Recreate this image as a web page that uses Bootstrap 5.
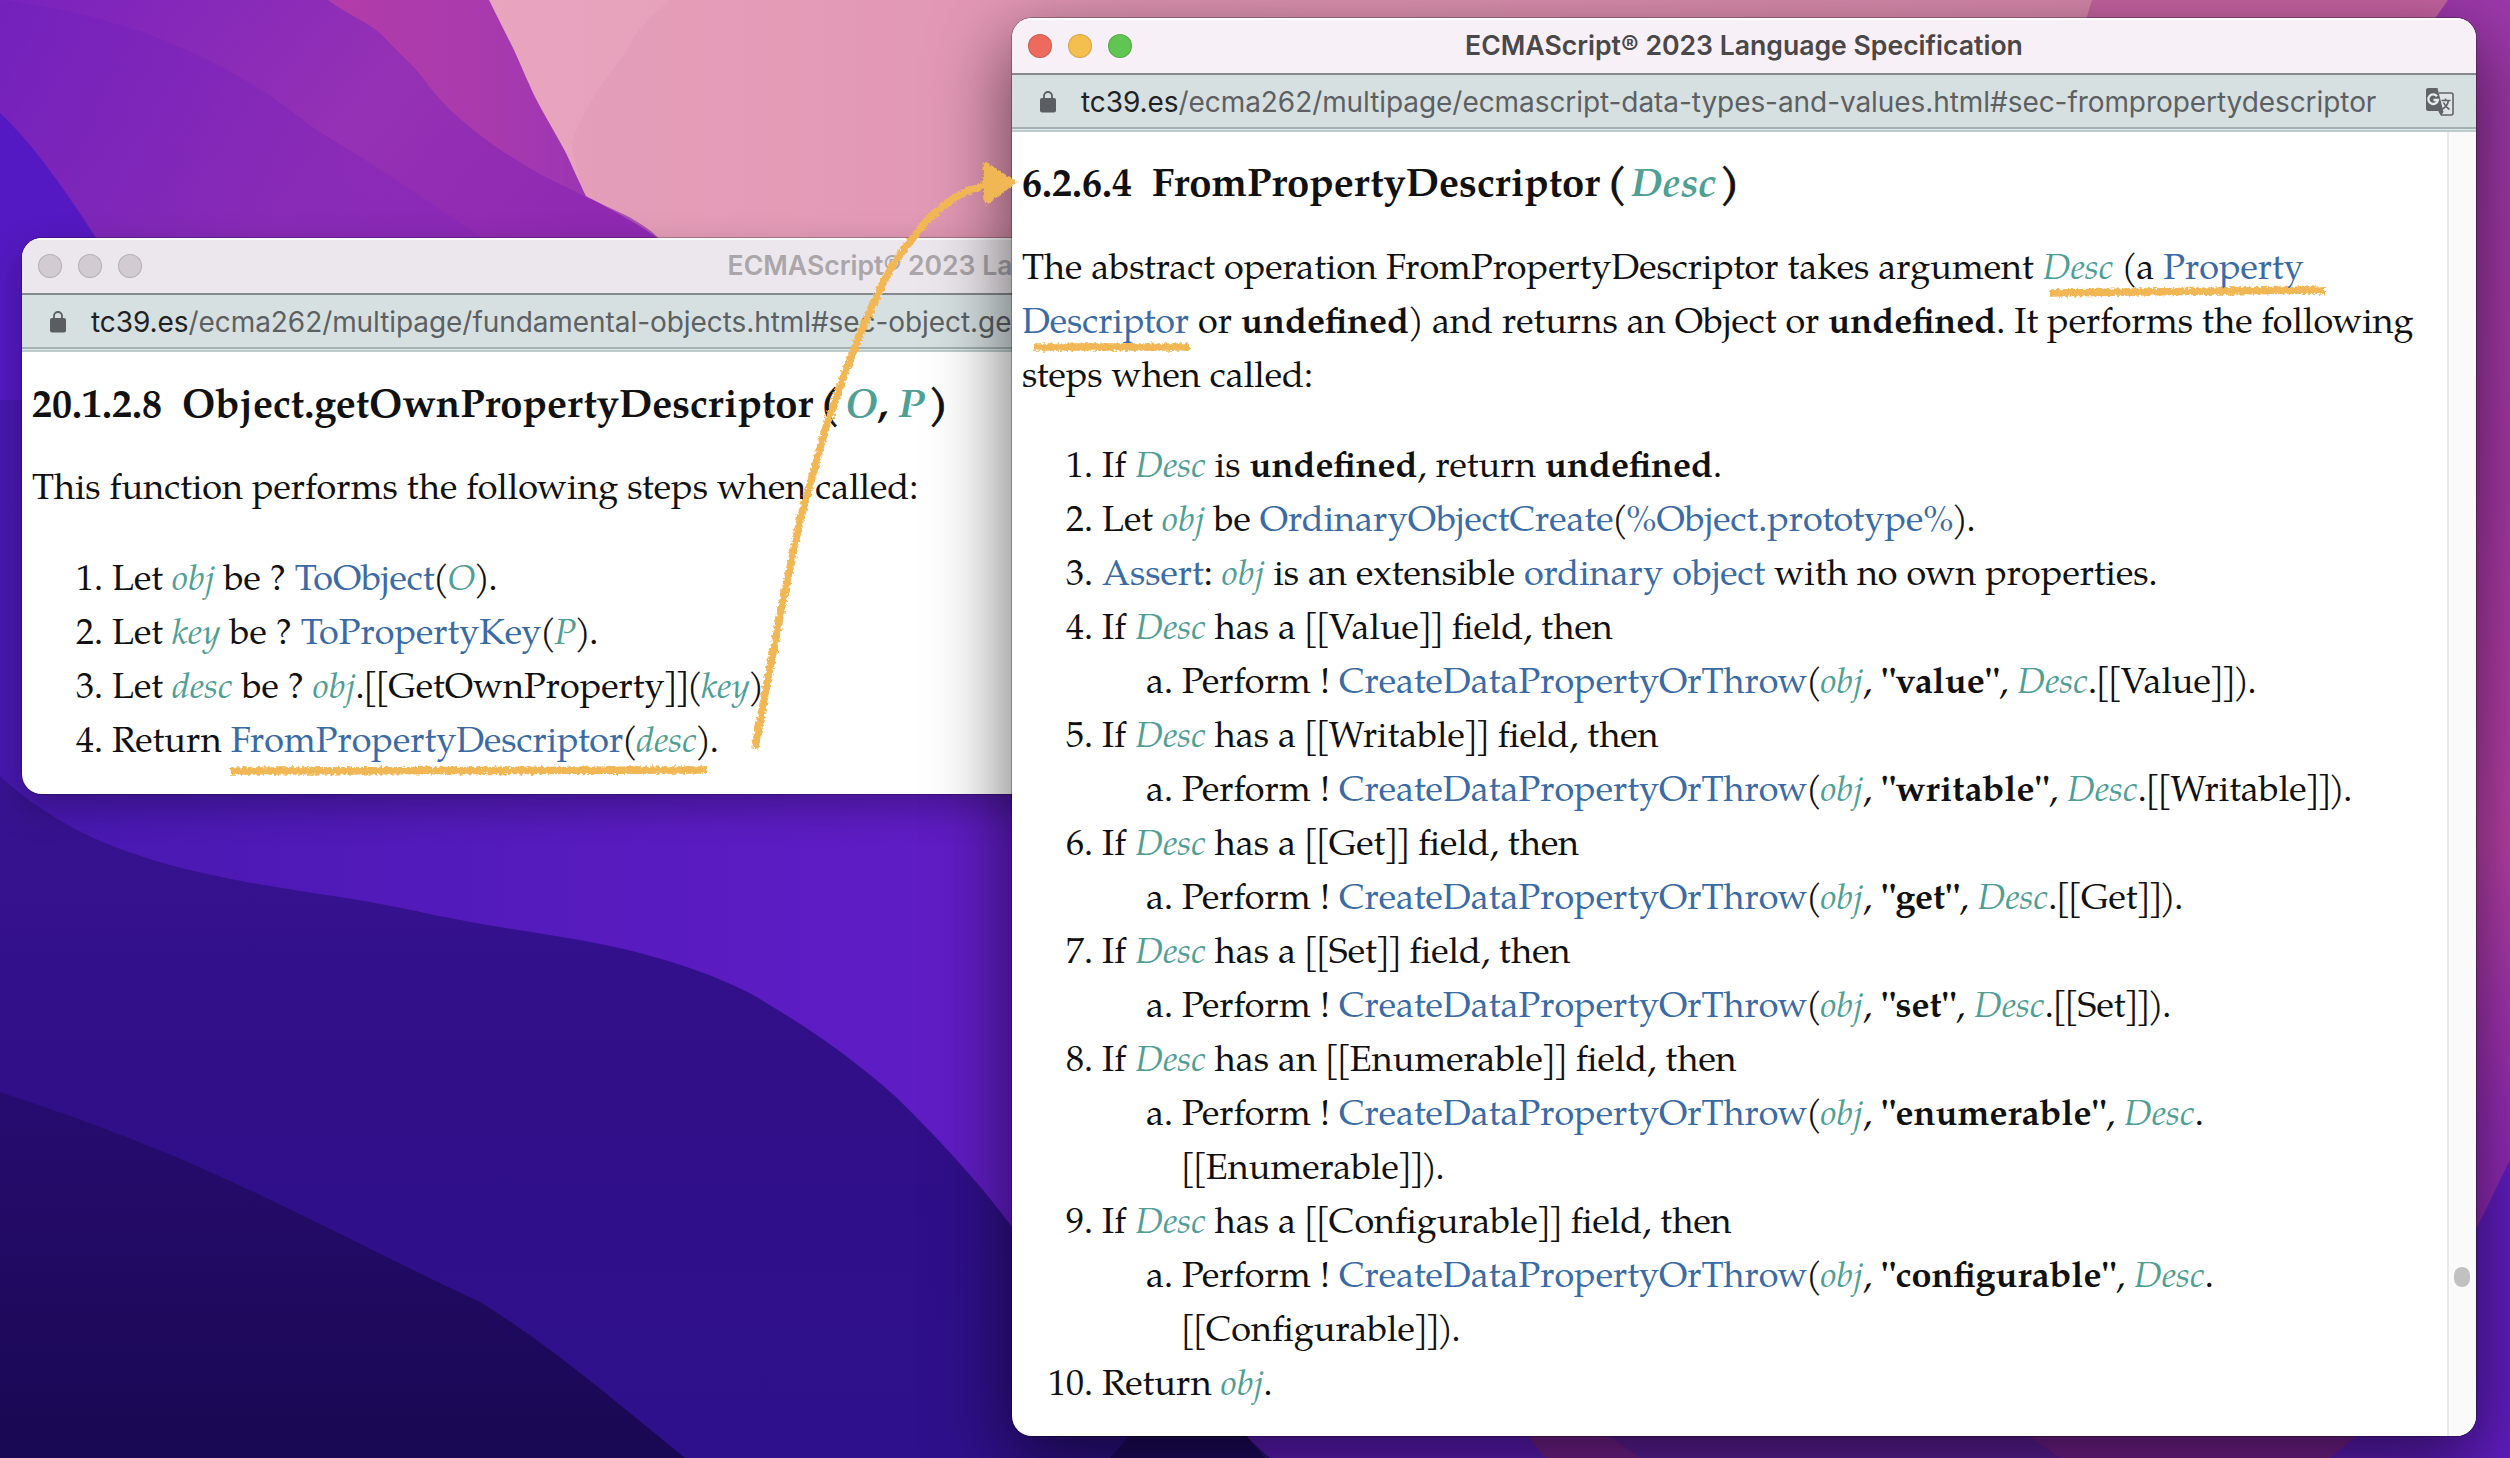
<!DOCTYPE html>
<html lang="en">
<head>
<meta charset="utf-8">
<title>ECMAScript® 2023 Language Specification</title>
<link href="https://cdn.jsdelivr.net/npm/bootstrap@5.3.0/dist/css/bootstrap.min.css" rel="stylesheet">
<style>
  body { width: 2510px; height: 1458px; background: #5c1cb8; }
  .wallpaper, .ink { left: 0; top: 0; width: 2510px; height: 1458px; }
  .ink { z-index: 5; pointer-events: none; }

  .browser { border-radius: 20px; overflow: hidden; background: #fff; }
  .browser-back { left: 22px; top: 238px; width: 1969px; height: 556px; box-shadow: 0 0 0 1px rgba(0,0,0,.22), 0 14px 36px rgba(0,0,0,.28); }
  .browser-front { left: 1012px; top: 18px; width: 1464px; height: 1418px; z-index: 3; box-shadow: 0 0 0 1px rgba(0,0,0,.25), 0 26px 76px 4px rgba(0,0,0,.56); }

  .title-strip { height: 57px; padding-left: 16px; border-bottom: 2px solid #85898b; background: #f7f0f6; box-shadow: inset 0 2px 0 rgba(255,255,255,.8); }
  .browser-back .title-strip { background: #ece7ec; }
  .title-text { font: 600 26.6px/55px Inter, sans-serif; color: #4a474a; }
  .browser-back .title-text { color: #aaa6aa; }
  .light { width: 24px; height: 24px; border-radius: 50%; border: 1px solid rgba(0,0,0,.14); }
  .light-red { background: #ed6a5e; } .light-amber { background: #f5bf4f; } .light-green { background: #61c554; }
  .browser-back .light { background: #d2ccd2; }

  .url-strip { height: 54px; padding: 2px 22px 0 28px; background: #d7e0e1; border-bottom: 2px solid #a3b1b0; font: 28px/50px Inter, sans-serif; letter-spacing: -.07px; color: #5c6063; }
  .url-strip .host { color: #1f2225; }
  .url-edge { height: 3px; border-bottom: 2px solid #bccccd; background: #dbe5e5; }
  .lock { margin-right: 25px; }

  .spec { font-family: "TeX Gyre Pagella", Palatino, "Liberation Serif", serif; font-size: 36px; line-height: 54px; color: #111; padding-left: 10px; white-space: nowrap; }
  .spec h1 { font-size: 40px; line-height: 54px; font-weight: 700; margin: 0; padding-top: 29px; }
  .spec h1 .num { margin-right: 20px; }
  .spec p { margin: 29px 0 37px; }
  .browser-front .spec h1 { padding-top: 28px; }
  .browser-front .spec p { margin: 30px 0 36px; }
  .spec ol { margin: 0; padding-left: 80px; }
  .spec ol ol { list-style-type: lower-alpha; }
  .spec var { color: #4f9f95; font-style: italic; }
  .spec a { color: #3a6ba5; text-decoration: none; }
  .spec .pn { margin: 0 -1.75px; }
  .spec p .pn { margin: 0 -1.2px; }
  .spec h1 .pn { margin: 0 -5px 0 -3px; -webkit-text-stroke: .8px #111; }
  .spec h1 .pn-close { margin: 0 0 0 -6px; }
  .scroll-track { width: 29px; border-left: 2px solid #e8e8e8; background: #fafafa; padding: 1135px 0 0 5px; }
  .scroll-thumb { width: 16px; height: 20px; border-radius: 8px; background: #c1c1c1; }
</style>
</head>
<body class="position-relative overflow-hidden m-0">

<svg class="wallpaper position-absolute" viewBox="0 0 2510 1458" aria-hidden="true">
  <defs>
    <linearGradient id="gPink" x1="0" x2="1"><stop offset="0" stop-color="#e8a5be"/><stop offset=".4" stop-color="#e296b3"/><stop offset="1" stop-color="#d888ac"/></linearGradient>
    <linearGradient id="gTop" x1="0" y1="0" x2="1" y2=".3"><stop offset="0" stop-color="#7a22be"/><stop offset=".6" stop-color="#9531b4"/><stop offset="1" stop-color="#8f29b2"/></linearGradient>
    <linearGradient id="gMid" x1="0" y1="0" x2="1" y2="0"><stop offset="0" stop-color="#6b1fba"/><stop offset="1" stop-color="#8526ba"/></linearGradient>
    <linearGradient id="gMag" x1="0" x2="1"><stop offset="0" stop-color="#b23ca9"/><stop offset=".6" stop-color="#a93aad"/><stop offset="1" stop-color="#9b35b4"/></linearGradient>
    <linearGradient id="gLow" x1="0" x2="1"><stop offset="0" stop-color="#4718b0"/><stop offset=".3" stop-color="#5b1cc2"/><stop offset=".42" stop-color="#621dc6"/><stop offset="1" stop-color="#621dc6"/></linearGradient>
    <linearGradient id="gNavy" x1="0" y1="0" x2="0" y2="1"><stop offset="0" stop-color="#391392"/><stop offset=".4" stop-color="#300f88"/><stop offset="1" stop-color="#2f108c"/></linearGradient>
    <linearGradient id="gInk" x1="0" y1="0" x2="0" y2="1"><stop offset="0" stop-color="#270c70"/><stop offset="1" stop-color="#190852"/></linearGradient>
    <linearGradient id="gRight" x1="0" y1="0" x2="0" y2="1"><stop offset="0" stop-color="#9c38ab"/><stop offset=".35" stop-color="#a938a8"/><stop offset=".6" stop-color="#bb41aa"/><stop offset=".8" stop-color="#962cb8"/><stop offset="1" stop-color="#8526b8"/></linearGradient>
  </defs>
  <rect width="2510" height="1458" fill="url(#gLow)"/>
  <path fill="url(#gTop)" d="M0 0H700V260H0Z"/>
  <path fill="url(#gMid)" d="M0 0Q180 20 312 127Q400 180 485 240H0Z" opacity=".45"/>
  <path fill="#5419c2" d="M0 113Q40 150 96 238L140 400H0Z"/>
  <path fill="url(#gMag)" d="M328 0C352 18 370 22 384 37C402 56 414 66 423 78C440 102 456 116 475 131C498 150 520 162 540 174C560 185 575 190 590 200V0Z"/>
  <path fill="url(#gPink)" d="M489 0C500 22 508 38 514 50C522 68 528 82 535 97C546 118 556 134 566 153C574 170 580 184 586 196C604 206 620 212 631 218C644 226 654 232 662 242H2130V0Z"/>
  <path fill="#e095b2" opacity=".35" d="M670 0C650 18 638 28 631 43C615 70 600 84 592 100C582 118 576 130 572 143C574 160 580 184 586 196C604 206 644 226 662 242H1500V0Z"/>
  <path fill="#c764a2" d="M2092 0L2080 40H2510V0Z"/>
  <path fill="url(#gRight)" d="M2448 0L2420 40V1400H2510V0Z"/>
  <path fill="#621dc4" d="M2510 1160C2490 1200 2480 1225 2455 1265L2320 1458H2510Z"/>
  <path fill="#7b2297" d="M1500 1400L1545 1458H2330L2400 1400Z"/>
  <path fill="#6420a4" d="M1560 1400L1640 1458H2060L1980 1400Z"/>
  <path fill="url(#gNavy)" d="M0 776C20 795 60 825 110 845C210 885 320 890 416 911C500 930 570 935 640 953C690 966 740 985 768 1004C820 1035 860 1065 896 1097C945 1145 985 1190 1012 1227L1270 1458H0Z"/>
  <path fill="url(#gInk)" d="M0 1092C80 1118 150 1145 208 1171C300 1212 390 1260 480 1302C550 1345 620 1405 685 1458H0Z"/>
  <path fill="#1f0a64" d="M1160 1400L1200 1380L1265 1458H1110Z"/>
</svg>

<section class="browser browser-back position-absolute d-flex flex-column">
  <header class="title-strip position-relative d-flex align-items-center gap-3 flex-shrink-0">
    <span class="light"></span><span class="light"></span><span class="light"></span>
    <div class="title-text position-absolute start-0 end-0 text-center">ECMAScript® 2023 Language Specification</div>
  </header>
  <div class="url-strip d-flex align-items-center flex-shrink-0">
    <svg class="lock" width="16" height="22" viewBox="0 0 16 22" aria-hidden="true"><rect y="7" width="16" height="14.5" rx="2" fill="#5a5d61"/><path d="M4 8V5a4 4 0 0 1 8 0v3" fill="none" stroke="#5a5d61" stroke-width="1.8"/></svg>
    <div class="text-nowrap"><span class="host">tc39.es</span>/ecma262/multipage/fundamental-objects.html#sec-object.ge</div>
  </div>
  <div class="url-edge flex-shrink-0"></div>
  <article class="spec">
    <h1><span class="num">20.1.2.8</span>Object.getOwnPropertyDescriptor ( <var>O</var>, <var>P</var> )</h1>
    <p>This function performs the following steps when called:</p>
    <ol>
      <li>Let <var>obj</var> be ? <a href="#">ToObject</a>(<var>O</var>).</li>
      <li>Let <var>key</var> be ? <a href="#">ToPropertyKey</a>(<var>P</var>).</li>
      <li>Let <var>desc</var> be ? <var>obj</var>.[[GetOwnProperty]](<var>key</var>)</li>
      <li>Return <a href="#">FromPropertyDescriptor</a>(<var>desc</var>).</li>
    </ol>
  </article>
</section>

<section class="browser browser-front position-absolute d-flex flex-column">
  <header class="title-strip position-relative d-flex align-items-center gap-3 flex-shrink-0">
    <span class="light light-red"></span><span class="light light-amber"></span><span class="light light-green"></span>
    <div class="title-text position-absolute start-0 end-0 text-center">ECMAScript® 2023 Language Specification</div>
  </header>
  <div class="url-strip d-flex align-items-center flex-shrink-0">
    <svg class="lock" width="16" height="22" viewBox="0 0 16 22" aria-hidden="true"><rect y="7" width="16" height="14.5" rx="2" fill="#5a5d61"/><path d="M4 8V5a4 4 0 0 1 8 0v3" fill="none" stroke="#5a5d61" stroke-width="1.8"/></svg>
    <div class="text-nowrap me-auto"><span class="host">tc39.es</span>/ecma262/multipage/ecmascript-data-types-and-values.html#sec-frompropertydescriptor</div>
    <svg width="28" height="28" viewBox="0 0 28 28" aria-hidden="true">
      <path d="M13 5H25a2 2 0 0 1 2 2V25a2 2 0 0 1-2 2H15.500L13 23" fill="#dfe5e6" stroke="#606367" stroke-width="1.6"/>
      <path d="M2 0H11.500L17.500 24 15 27.500 13.500 23H2a2 2 0 0 1-2-2V2A2 2 0 0 1 2 0Z" fill="#606367"/>
      <path d="M11 8.300A4.800 4.800 0 1 0 11.900 12H7.500" fill="none" stroke="#e6ecec" stroke-width="2.300"/>
      <path d="M15.500 12.500H24.500M19.500 10.500V12.500M22.500 12.500Q21.500 18 16.500 21M17.500 14.500Q19.500 19 23.500 21.500" fill="none" stroke="#606367" stroke-width="1.600"/>
    </svg>
  </div>
  <div class="url-edge flex-shrink-0"></div>
  <div class="d-flex flex-grow-1">
    <article class="spec flex-grow-1">
      <h1><span class="num">6.2.6.4</span>FromPropertyDescriptor ( <var>Desc</var> )</h1>
      <p>The abstract operation FromPropertyDescriptor takes argument <var>Desc</var> (a <a href="#">Property<br>Descriptor</a> or <b>undefined</b>) and returns an Object or <b>undefined</b>. It performs the following<br>steps when called:</p>
      <ol>
        <li>If <var>Desc</var> is <b>undefined</b>, return <b>undefined</b>.</li>
        <li>Let <var>obj</var> be <a href="#">OrdinaryObjectCreate</a>(<a href="#">%Object.prototype%</a>).</li>
        <li><a href="#">Assert</a>: <var>obj</var> is an extensible <a href="#">ordinary object</a> with no own properties.</li>
        <li>If <var>Desc</var> has a [[Value]] field, then
          <ol><li>Perform ! <a href="#">CreateDataPropertyOrThrow</a>(<var>obj</var>, <b>"value"</b>, <var>Desc</var>.[[Value]]).</li></ol></li>
        <li>If <var>Desc</var> has a [[Writable]] field, then
          <ol><li>Perform ! <a href="#">CreateDataPropertyOrThrow</a>(<var>obj</var>, <b>"writable"</b>, <var>Desc</var>.[[Writable]]).</li></ol></li>
        <li>If <var>Desc</var> has a [[Get]] field, then
          <ol><li>Perform ! <a href="#">CreateDataPropertyOrThrow</a>(<var>obj</var>, <b>"get"</b>, <var>Desc</var>.[[Get]]).</li></ol></li>
        <li>If <var>Desc</var> has a [[Set]] field, then
          <ol><li>Perform ! <a href="#">CreateDataPropertyOrThrow</a>(<var>obj</var>, <b>"set"</b>, <var>Desc</var>.[[Set]]).</li></ol></li>
        <li>If <var>Desc</var> has an [[Enumerable]] field, then
          <ol><li>Perform ! <a href="#">CreateDataPropertyOrThrow</a>(<var>obj</var>, <b>"enumerable"</b>, <var>Desc</var>.<br>[[Enumerable]]).</li></ol></li>
        <li>If <var>Desc</var> has a [[Configurable]] field, then
          <ol><li>Perform ! <a href="#">CreateDataPropertyOrThrow</a>(<var>obj</var>, <b>"configurable"</b>, <var>Desc</var>.<br>[[Configurable]]).</li></ol></li>
        <li>Return <var>obj</var>.</li>
      </ol>
    </article>
    <div class="scroll-track flex-shrink-0"><div class="scroll-thumb"></div></div>
  </div>
</section>

<svg class="ink position-absolute" viewBox="0 0 2510 1458" aria-hidden="true">
  <defs><filter id="chalk" filterUnits="userSpaceOnUse" x="0" y="0" width="2510" height="1458"><feTurbulence type="fractalNoise" baseFrequency=".35" numOctaves="2" seed="4"/><feDisplacementMap in="SourceGraphic" scale="6" xChannelSelector="R" yChannelSelector="G"/></filter></defs>
  <g filter="url(#chalk)" fill="none" stroke="#f2b755" stroke-width="7.500">
    <path d="M755 748C762 710 765 693 780 617C786 585 795 545 800 520L815 467C822 440 826 425 833 407C840 385 847 368 855 347C863 325 872 308 881 287C890 268 904 248 917 233C928 217 940 207 956 197C966 191 975 188 985 185"/>
    <path d="M231 771L707 770M2050 293L2325 290M1034 347L1190 347"/>
    <path d="M984 163L1015 182L986 203Z" fill="#f2b755" stroke-width="3" stroke-linejoin="round"/>
  </g>
</svg>
<script src="https://cdn.jsdelivr.net/npm/bootstrap@5.3.0/dist/js/bootstrap.bundle.min.js"></script>
<script>
  // Tighten the side bearings of brackets and parentheses in the spec text
  document.querySelectorAll('.spec').forEach(spec => {
    const walker = document.createTreeWalker(spec, NodeFilter.SHOW_TEXT), nodes = [];
    while (walker.nextNode()) if (/[()\[\]]/.test(walker.currentNode.data)) nodes.push(walker.currentNode);
    nodes.forEach(n => n.replaceWith(...n.data.split(/([()\[\]])/).filter(Boolean).map(t => {
      if (!/^[()\[\]]$/.test(t)) return t;
      const s = document.createElement('span');
      s.className = t === ')' ? 'pn pn-close' : 'pn';
      s.textContent = t;
      return s;
    })));
  });
</script>
</body>
</html>
